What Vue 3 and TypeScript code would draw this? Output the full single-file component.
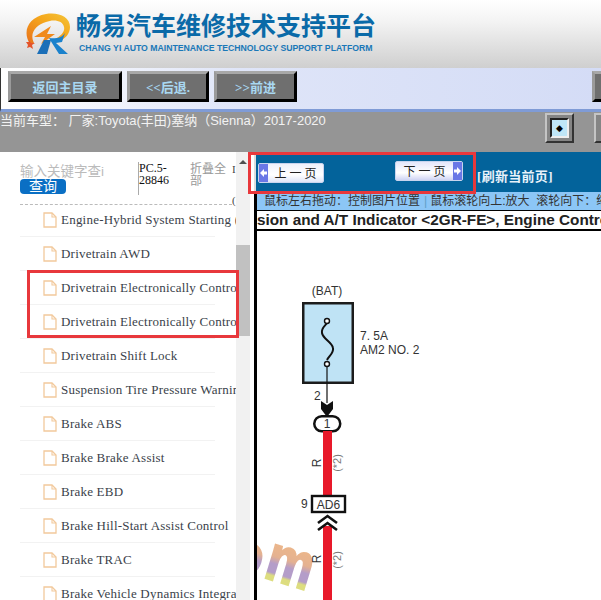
<script setup lang="ts">
const navButtons = [
  { label: '返回主目录', width: 114 },
  { label: '<<后退.', width: 82 },
  { label: '>>前进', width: 83 },
]

const docs = [
  'Engine-Hybrid System Starting (',
  'Drivetrain AWD',
  'Drivetrain Electronically Controlled',
  'Drivetrain Electronically Controlled',
  'Drivetrain Shift Lock',
  'Suspension Tire Pressure Warning',
  'Brake ABS',
  'Brake Brake Assist',
  'Brake EBD',
  'Brake Hill-Start Assist Control',
  'Brake TRAC',
  'Brake Vehicle Dynamics Integrated',
]
</script>

<template>
  <div class="page">
    <header class="brand">
      <svg class="logo" width="46" height="42" viewBox="0 0 46 42">
        <defs>
          <linearGradient id="ring" x1="0" y1="1" x2="1" y2="0">
            <stop offset="0" stop-color="#e8701a" />
            <stop offset="0.6" stop-color="#f5a81c" />
            <stop offset="1" stop-color="#f3c53a" />
          </linearGradient>
        </defs>
        <path d="M5 31C-3 19 3 4 21 1c13-2 24 3 24 13 0 7-5 12-11 14l-2-3c5-3 8-7 7-11-1-7-11-8-18-5C11 12 4 20 9 30z" fill="url(#ring)" />
        <path d="M9 24l17-11-4 8h8L16 31l4-7z" fill="#f08a1c" />
        <path d="M4 27l2 3 4 0-3 2 1 4-3-2-3 1 1-3-2-3 3 0z" fill="#e4542a" />
        <path d="M12 41l7-14h7l-4 14z" fill="#1b6fb8" />
        <path d="M24 25c6 1 13 0 16-5l-3 9-6 1 12 11h-9L27 30z" fill="#1b82cc" />
      </svg>
      <div class="brand-text">
        <div class="brand-title">畅易汽车维修技术支持平台</div>
        <div class="brand-sub">CHANG YI AUTO MAINTENANCE TECHNOLOGY SUPPORT PLATFORM</div>
      </div>
    </header>

    <nav class="toolbar">
      <button v-for="b in navButtons" :key="b.label" class="tool-btn" :style="{ width: b.width + 'px' }">{{ b.label }}</button>
      <button class="tool-btn tool-btn-edge"></button>
    </nav>

    <div class="model-bar">
      <span class="model-text">当前车型： 厂家:Toyota(丰田)塞纳（Sienna）2017-2020</span>
      <button class="square-btn"><span class="square-inner">◆</span></button>
      <button class="square-btn square-edge"></button>
    </div>

    <main class="body">
      <aside class="sidebar">
        <div class="search">
          <div class="search-left">
            <div class="search-input">输入关键字查i</div>
            <div class="search-btn">查询</div>
          </div>
          <div class="code">PC.5-28846</div>
          <div class="fold">折叠全部</div>
          <div class="cut-text">I<br />(</div>
        </div>
        <ul class="doc-list">
          <li v-for="(d, i) in docs" :key="i" class="doc">
            <svg class="doc-icon" width="14" height="16" viewBox="0 0 14 16">
              <path d="M1 1h8l4 4v10H1z" fill="#fff" stroke="#f2c99c" stroke-width="1.3" />
              <path d="M9 1v4h4" fill="none" stroke="#f2c99c" stroke-width="1.1" />
            </svg>
            <span class="doc-name">{{ d }}</span>
          </li>
        </ul>
      </aside>

      <div class="scrollbar">
        <span class="scroll-up"></span>
        <span class="scroll-thumb"></span>
      </div>

      <section class="viewer">
        <div class="pager">
          <button class="page-btn page-prev">
            <svg class="pb-arrow" width="9" height="18" viewBox="0 0 9 18"><path d="M1 9l4-4v2.5h3v3H5V13z" fill="#fff" /></svg>
            <span>上 一 页</span>
          </button>
          <button class="page-btn page-next">
            <span>下 一 页</span>
            <svg class="pb-arrow" width="9" height="18" viewBox="0 0 9 18"><path d="M8 9L4 5v2.500H1v3h3V13z" fill="#fff" /></svg>
          </button>
          <span class="refresh">[刷新当前页]</span>
        </div>
        <div class="sheet">
          <div class="hint">鼠标左右拖动：控制图片位置<span class="hint-sep">|</span>鼠标滚轮向上:放大&nbsp;&nbsp;滚轮向下：缩小</div>
          <div class="sheet-title">sion and A/T Indicator &lt;2GR-FE&gt;, Engine Control</div>
          <svg class="diagram" width="344" height="369" viewBox="0 0 344 369">
            <defs>
              <linearGradient id="tube" gradientUnits="userSpaceOnUse" x1="0" y1="-36" x2="0" y2="0">
                <stop offset="0" stop-color="#e8aa78" />
                <stop offset="0.35" stop-color="#e0a47e" />
                <stop offset="0.55" stop-color="#a88cc0" />
                <stop offset="0.8" stop-color="#a88cc0" />
                <stop offset="0.88" stop-color="#d8d86a" />
                <stop offset="1" stop-color="#d8d86a" />
              </linearGradient>
            </defs>
            <g class="wm">
              <text transform="translate(-33 336) rotate(18)" font-size="58" fill="url(#tube)" stroke="url(#tube)" stroke-width="2">o</text>
              <text transform="translate(5 346) rotate(17) scale(0.8 1)" font-size="66" fill="url(#tube)" stroke="url(#tube)" stroke-width="2">m</text>
            </g>
            <text x="70" y="64" class="d-t" text-anchor="middle">(BAT)</text>
            <rect x="46.25" y="72.25" width="49.5" height="79.5" fill="#bfe3f5" stroke="#1c1c1c" stroke-width="2.5" />
            <path d="M70 92c-2 3-6 5-5 10 1 6 10 9 11 15 1 5-4 8-6 12" fill="none" stroke="#111" stroke-width="2" />
            <circle cx="70" cy="90" r="2.5" fill="#fff" stroke="#111" stroke-width="1.4" />
            <circle cx="70" cy="133" r="2.5" fill="#fff" stroke="#111" stroke-width="1.4" />
            <path d="M70 136v36" stroke="#111" stroke-width="1.2" />
            <text x="103" y="109" class="d-t">7. 5A</text>
            <text x="103" y="123" class="d-t">AM2 NO. 2</text>
            <text x="57" y="169" class="d-t">2</text>
            <path d="M64 170l6 4 6-4v8l-6 8-6-8z" fill="#111" />
            <rect x="57.25" y="185.25" width="26" height="15" rx="7.5" fill="#fff" stroke="#111" stroke-width="2.5" />
            <text x="70" y="197" class="d-t" text-anchor="middle">1</text>
            <rect x="66" y="200" width="9" height="64" fill="#e8192a" />
            <rect x="66" y="295" width="9" height="74" fill="#e8192a" />
            <text class="d-t" transform="translate(64 232) rotate(-90)" text-anchor="middle">R</text>
            <text class="d-t" transform="translate(64 328) rotate(-90)" text-anchor="middle">R</text>
            <text class="d-xs" transform="translate(84 232) rotate(-90)" text-anchor="middle">(*2)</text>
            <text class="d-xs" transform="translate(84 329) rotate(-90)" text-anchor="middle">(*2)</text>
            <rect x="55" y="265" width="33" height="16" fill="#fff" stroke="#111" stroke-width="2.4" />
            <text x="71.5" y="277.5" class="d-t" text-anchor="middle">AD6</text>
            <text x="44" y="277" class="d-t">9</text>
            <path d="M61 292l9.5-7 9.5 7M61 299l9.5-7 9.5 7" fill="none" stroke="#111" stroke-width="2.6" />
          </svg>
        </div>
      </section>

      <div class="highlight highlight-list"></div>
      <div class="highlight highlight-pager"></div>
    </main>
  </div>
</template>

<style>
html, body { margin: 0; background: #fff; overflow: hidden; }
</style>

<style scoped>
.page {
  width: 601px;
  height: 600px;
  overflow: hidden;
  font-family: "Liberation Sans", "Noto Sans CJK SC", sans-serif;
  display: flex;
  flex-direction: column;
}

.brand {
  height: 68px;
  flex: none;
  display: flex;
  gap: 5px;
  padding: 12px 0 0 25px;
  box-sizing: border-box;
  background: linear-gradient(#fff, #f4f4f4 30%, #cfcfcf);
}
.logo { margin-top: 1px; flex: none; }
.brand-title {
  font-size: 25px;
  line-height: 29px;
  font-weight: 700;
  color: #0a6aa8;
  white-space: nowrap;
}
.brand-sub {
  margin: 2px 0 0 3px;
  font-size: 8.7px;
  line-height: 11px;
  font-weight: 700;
  color: #1a78b8;
  white-space: nowrap;
}

.toolbar {
  height: 44px;
  flex: none;
  display: flex;
  gap: 5px;
  padding: 3px 0 0 7px;
  box-sizing: border-box;
  background: linear-gradient(90deg, #fff, #dfe5f8 40%, #d4dcf6);
  border-bottom: 3px solid #7f9bd6;
  border-left: 1px solid #333;
  overflow: hidden;
}
.tool-btn {
  height: 31px;
  flex: none;
  padding: 0;
  background: #6f6f6f;
  border: 3px solid;
  border-color: #a8a8a8 #000 #000 #9a9a9a;
  color: #a9d8f2;
  font-family: "Liberation Serif", "Noto Sans CJK SC", serif;
  font-size: 13px;
  font-weight: 700;
}
.tool-btn-edge { width: 40px; margin-left: 290px; }

.model-bar {
  height: 40px;
  flex: none;
  display: flex;
  align-items: flex-start;
  background: #959595;
}
.model-text {
  width: 545px;
  flex: none;
  color: #f2f2f2;
  font-size: 13px;
  line-height: 18px;
  white-space: nowrap;
}
.square-btn {
  width: 29px;
  height: 30px;
  flex: none;
  margin: 1px 20px 0 0;
  padding: 0;
  background: #858585;
  border: 2px solid;
  border-color: #c4c4c4 #333 #333 #c4c4c4;
  display: flex;
  align-items: center;
  justify-content: center;
}
.square-inner {
  width: 15px;
  height: 16px;
  background: #bfe6f7;
  border: 2px solid;
  border-color: #222 #eee #eee #222;
  font-size: 9px;
  line-height: 16px;
  text-align: center;
  color: #000;
}
.square-edge { margin-right: 0; }

.body {
  flex: 1;
  min-height: 0;
  display: flex;
  position: relative;
}

.sidebar {
  width: 236px;
  flex: none;
  overflow: hidden;
  background: #fff;
  box-sizing: border-box;
  padding-left: 20px;
}
.search {
  height: 53px;
  box-sizing: border-box;
  display: flex;
  align-items: flex-start;
  padding-top: 10px;
  border-bottom: 1px dashed #bbb;
  width: 212px;
}
.search-left { width: 118px; flex: none; padding-top: 2px; }
.search-input {
  width: 84px;
  overflow: hidden;
  white-space: nowrap;
  color: #bbb;
  font-size: 13.5px;
  line-height: 15px;
}
.search-btn {
  width: 46px;
  height: 15px;
  background: #0a6fc4;
  border-radius: 4px;
  color: #fff;
  font-size: 14px;
  line-height: 15px;
  text-align: center;
}
.code {
  width: 34px;
  height: 33px;
  flex: none;
  box-sizing: border-box;
  border-left: 1px solid #aaa;
  font-family: "Liberation Serif", serif;
  font-size: 12px;
  line-height: 12px;
  color: #111;
  word-break: break-word;
}
.fold {
  width: 36px;
  flex: none;
  margin: 1px 0 0 18px;
  color: #999;
  font-size: 12px;
  line-height: 12px;
}
.cut-text {
  flex: none;
  width: 4px;
  margin: -8px 0 0 6px;
  font-family: "Liberation Serif", serif;
  font-size: 11px;
  line-height: 31px;
  color: #444;
}
.doc-list {
  list-style: none;
  margin: -2px 0 0;
  padding: 0;
}
.doc {
  height: 34px;
  width: 195px;
  box-sizing: border-box;
  display: flex;
  align-items: center;
  gap: 4px;
  padding-left: 23px;
  border-bottom: 1px solid #f2f2f2;
  white-space: nowrap;
}
.doc-icon { flex: none; }
.doc-name {
  font-family: "Liberation Serif", serif;
  font-size: 13px;
  letter-spacing: 0.22px;
  color: #3a3f4a;
}

.scrollbar {
  width: 14px;
  flex: none;
  background: #f1f1f1;
  display: flex;
  flex-direction: column;
  align-items: center;
}
.scroll-up {
  margin-top: 8px;
  width: 0;
  height: 0;
  border-left: 4px solid transparent;
  border-right: 4px solid transparent;
  border-bottom: 4px solid #505050;
}
.scroll-thumb {
  width: 14px;
  height: 91px;
  margin-top: 81px;
  background: #c1c1c1;
}

.viewer {
  flex: 1;
  min-width: 0;
  margin-left: 4px;
  overflow: hidden;
  display: flex;
  flex-direction: column;
}
.pager {
  height: 40px;
  flex: none;
  box-sizing: border-box;
  border-left: 2px solid #ddd;
  background: #03639b;
  display: flex;
  align-items: flex-start;
}
.page-btn {
  height: 20px;
  flex: none;
  padding: 0;
  display: flex;
  align-items: center;
  justify-content: space-between;
  border: 1px solid #c8d4ee;
  border-radius: 2px;
  background: linear-gradient(#eef1fb, #fff 60%, #dfe5f8);
  color: #222;
  font-family: "Liberation Serif", "Noto Sans CJK SC", serif;
  font-size: 12px;
}
.page-btn span { flex: 1; text-align: center; }
.page-prev { width: 66px; margin: 11px 0 0 2px; }
.page-next { width: 68px; margin: 9px 0 0 71px; background: linear-gradient(#e4e6fa, #fff 60%, #cfd4f4); }
.pb-arrow {
  flex: none;
  background: #6a78e6;
}
.refresh {
  margin: 16px 0 0 14px;
  color: #e8f2fa;
  font-family: "Liberation Serif", "Noto Sans CJK SC", serif;
  font-size: 13px;
  line-height: 18px;
  font-weight: 700;
  letter-spacing: 0.3px;
  white-space: nowrap;
}

.sheet {
  flex: 1;
  min-height: 0;
  display: flex;
  flex-direction: column;
  border-left: 3px solid #000;
  background: #fff;
}
.hint {
  height: 18px;
  flex: none;
  padding-left: 7px;
  background: #8cc6f6;
  color: #333;
  font-size: 12px;
  line-height: 19px;
  white-space: nowrap;
}
.hint-sep { margin: 0 3px 0 4px; color: #5f9fc8; }
.sheet-title {
  height: 21px;
  flex: none;
  box-sizing: border-box;
  border-top: 1px solid #000;
  border-bottom: 2px solid #000;
  background: #fff;
  color: #222;
  font-size: 15.3px;
  font-weight: 700;
  line-height: 18px;
  white-space: nowrap;
}
.diagram { flex: none; display: block; }
.wm {
  font-family: "Liberation Sans", sans-serif;
  font-weight: 700;
  opacity: 0.85;
  filter: blur(0.5px);
}
.d-t { font-size: 12px; fill: #333; font-family: "Liberation Sans", sans-serif; }
.d-xs { font-size: 11px; fill: #777; font-family: "Liberation Sans", sans-serif; }

.highlight {
  position: absolute;
  box-sizing: border-box;
  border: 3px solid #e8383c;
  pointer-events: none;
}
.highlight-list { left: 27px; top: 118px; width: 212px; height: 68px; }
.highlight-pager { left: 248px; top: 0; width: 228px; height: 42px; }
</style>
